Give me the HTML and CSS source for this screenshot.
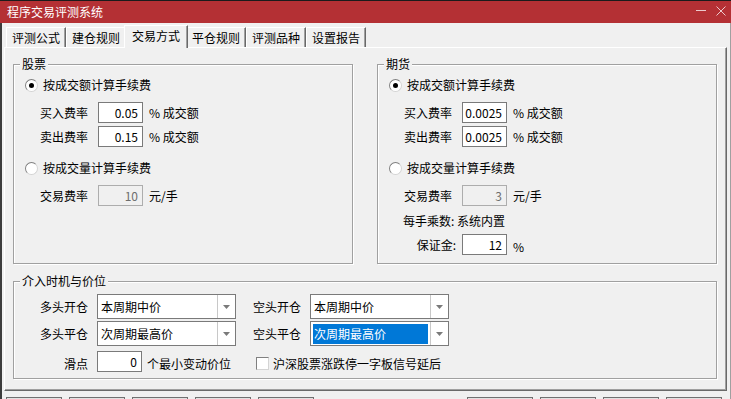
FILE: index.html
```html
<!DOCTYPE html>
<html lang="zh-CN">
<head>
    <meta charset="UTF-8">
    <title>程序交易评测系统</title>
    <link rel="stylesheet" href="styles.css">
</head>
<body>
    <div class="window">
        <div class="titlebar">
            <span class="title">程序交易评测系统</span>
            <span class="win-btns">
                <svg width="10" height="10" viewBox="0 0 10 10"><path d="M0 4.5H10" stroke="#ecc9cb" stroke-width="1"/></svg>
                <svg width="10" height="10" viewBox="0 0 10 10"><path d="M0.5 0.5L9.5 9.5M9.5 0.5L0.5 9.5" stroke="#ecc9cb" stroke-width="1"/></svg>
            </span>
        </div>

        <div class="client">
            <div class="tabs">
                <div class="tab">评测公式</div>
                <div class="tab">建仓规则</div>
                <div class="tab active">交易方式</div>
                <div class="tab">平仓规则</div>
                <div class="tab">评测品种</div>
                <div class="tab">设置报告</div>
            </div>

            <div class="panel">
                <div class="top-groups">
                    <div class="group">
                        <div class="legend">股票</div>
                        <div class="opt"><span class="radio on"></span>按成交额计算手续费</div>
                        <div class="field">
                            <span class="label">买入费率</span>
                            <span class="edit">0.05</span>
                            <span class="unit">% 成交额</span>
                        </div>
                        <div class="field">
                            <span class="label">卖出费率</span>
                            <span class="edit">0.15</span>
                            <span class="unit">% 成交额</span>
                        </div>
                        <div class="opt"><span class="radio"></span>按成交量计算手续费</div>
                        <div class="field">
                            <span class="label">交易费率</span>
                            <span class="edit off">10</span>
                            <span class="unit">元/手</span>
                        </div>
                    </div>

                    <div class="group">
                        <div class="legend">期货</div>
                        <div class="opt"><span class="radio on"></span>按成交额计算手续费</div>
                        <div class="field">
                            <span class="label">买入费率</span>
                            <span class="edit">0.0025</span>
                            <span class="unit">% 成交额</span>
                        </div>
                        <div class="field">
                            <span class="label">卖出费率</span>
                            <span class="edit">0.0025</span>
                            <span class="unit">% 成交额</span>
                        </div>
                        <div class="opt"><span class="radio"></span>按成交量计算手续费</div>
                        <div class="field">
                            <span class="label">交易费率</span>
                            <span class="edit off">3</span>
                            <span class="unit">元/手</span>
                        </div>
                        <div class="note">每手乘数: 系统内置</div>
                        <div class="field">
                            <span class="label wide">保证金:</span>
                            <span class="edit">12</span>
                            <span class="unit low">%</span>
                        </div>
                    </div>
                </div>

                <div class="group entry">
                    <div class="legend">介入时机与价位</div>
                    <div class="row">
                        <span class="label">多头开仓</span>
                        <div class="combo">
                            <span class="combo-text">本周期中价</span>
                            <span class="combo-btn"><svg width="7" height="4" viewBox="0 0 7 4"><path d="M0 0H7L3.5 4Z" fill="#7a7a7a"/></svg></span>
                        </div>
                        <span class="label">空头开仓</span>
                        <div class="combo">
                            <span class="combo-text">本周期中价</span>
                            <span class="combo-btn"><svg width="7" height="4" viewBox="0 0 7 4"><path d="M0 0H7L3.5 4Z" fill="#7a7a7a"/></svg></span>
                        </div>
                    </div>
                    <div class="row">
                        <span class="label">多头平仓</span>
                        <div class="combo">
                            <span class="combo-text">次周期最高价</span>
                            <span class="combo-btn"><svg width="7" height="4" viewBox="0 0 7 4"><path d="M0 0H7L3.5 4Z" fill="#7a7a7a"/></svg></span>
                        </div>
                        <span class="label">空头平仓</span>
                        <div class="combo focus">
                            <span class="combo-text">次周期最高价</span>
                            <span class="combo-btn"><svg width="7" height="4" viewBox="0 0 7 4"><path d="M0 0H7L3.5 4Z" fill="#7a7a7a"/></svg></span>
                        </div>
                    </div>
                    <div class="row last">
                        <span class="label">滑点</span>
                        <div class="slip">
                            <span class="edit">0</span>
                            <span class="unit">个最小变动价位</span>
                        </div>
                        <div class="check"><span class="box"></span>沪深股票涨跌停一字板信号延后</div>
                    </div>
                </div>
            </div>

            <div class="buttons">
                <span class="btn"></span>
                <span class="btn"></span>
                <span class="btn"></span>
                <span class="btn"></span>
                <span class="btn"></span>
                <span class="btn wide"></span>
                <span class="btn"></span>
                <span class="btn"></span>
                <span class="btn"></span>
            </div>
        </div>
    </div>
</body>
</html>
```

FILE: styles.css
```css
* {
    box-sizing: border-box;
}
html, body {
    margin: 0;
}
body {
    width: 731px;
    height: 399px;
    overflow: hidden;
    font: 12px/16px "Noto Sans CJK SC", "Noto Sans", sans-serif;
    color: #000;
    background: #f0f0f0;
}
.window {
    display: flex;
    flex-direction: column;
    height: 399px;
    overflow: hidden;
}

/* title bar */
.titlebar {
    flex: none;
    height: 23px;
    border-top: 1px solid #1b1b1b;
    background: #b43034;
    color: #fff;
    display: flex;
    align-items: center;
    justify-content: space-between;
    padding: 0 5px 0 7px;
}
.win-btns {
    display: flex;
    gap: 10px;
    margin-top: -3px;
}
.win-btns svg {
    display: block;
}

/* dialog body */
.client {
    flex: 1;
    min-height: 0;
    overflow: hidden;
    display: flex;
    flex-direction: column;
    border-left: 2px solid #3c3c3c;
    border-right: 1px solid #a0a0a0;
    padding: 2px 3px 0 2px;
}
.tabs {
    display: flex;
    align-items: flex-end;
    height: 22px;
    padding-left: 2px;
}
.tab {
    width: 60px;
    height: 20px;
    display: flex;
    align-items: center;
    justify-content: center;
    border-top: 1px solid #fff;
    border-left: 1px solid #fff;
    border-right: 1px solid #696969;
    box-shadow: inset -1px 0 0 #a0a0a0;
    background: #f0f0f0;
}
.tab.active {
    width: 64px;
    height: 23px;
    margin: 0 -2px -1px;
    padding-bottom: 3px;
    position: relative;
    z-index: 1;
}
.panel {
    flex: none;
    height: 344px;
    border: 1px solid;
    border-color: #fff #696969 #696969 #fff;
    box-shadow: inset -1px -1px 0 #a0a0a0;
    padding: 16px 9px 11px 8px;
}
.top-groups {
    display: flex;
    gap: 24px;
}
.group {
    border: 1px solid #a0a0a0;
    box-shadow: inset 1px 1px 0 #fff, 1px 1px 0 #fff;
}
.top-groups .group {
    width: 340px;
    height: 200px;
}
.legend {
    display: table;
    margin: -8px 0 0 6px;
    padding: 0 2px;
    line-height: 14px;
    background: #f0f0f0;
}

/* radio + edit rows */
.opt {
    display: flex;
    align-items: center;
    margin-top: 6px;
    padding-left: 11px;
}
.field + .opt {
    margin-top: 13px;
}
.radio {
    width: 13px;
    height: 13px;
    border-radius: 50%;
    border: 1px solid;
    border-color: #808080 #d4d4d4 #d4d4d4 #808080;
    background: #fff;
    margin-right: 5px;
    display: flex;
    align-items: center;
    justify-content: center;
}
.radio.on::after {
    content: "";
    width: 5px;
    height: 5px;
    border-radius: 50%;
    background: #000;
}
.field {
    display: flex;
    align-items: center;
    height: 21px;
    padding-left: 26px;
}
.opt + .field {
    margin-top: 9px;
}
.field + .field {
    margin-top: 3px;
}
.note + .field {
    margin-top: 5px;
}
.field .label {
    width: 48px;
    margin-right: 10px;
}
.field .label.wide {
    width: 52px;
    margin-right: 6px;
    text-align: right;
}
.note {
    margin-top: 7px;
    padding-left: 25px;
}
.edit {
    flex: none;
    width: 45px;
    height: 21px;
    border: 1px solid #7a7a7a;
    background: #fff;
    text-align: right;
    padding-right: 4px;
    line-height: 19px;
}
.edit.off {
    background: #f0f0f0;
    border-color: #adadad;
    color: #6d6d6d;
}
.unit {
    margin-left: 6px;
}
.unit.low {
    padding-top: 5px;
}

/* entry group */
.entry {
    margin-top: 17px;
    height: 98px;
}
.row {
    display: flex;
    align-items: center;
    padding-left: 26px;
    margin-top: 2px;
}
.entry .legend + .row {
    margin-top: 6px;
}
.row.last {
    margin-top: 5px;
    height: 21px;
}
.row .label {
    width: 48px;
    margin-right: 9px;
    text-align: right;
}
.combo + .label {
    margin-left: 17px;
}
.combo {
    width: 139px;
    height: 25px;
    display: flex;
    border: 1px solid #7a7a7a;
    background: #fff;
}
.combo-text {
    flex: 1;
    padding-left: 3px;
    line-height: 23px;
}
.combo.focus .combo-text {
    margin: 2px 2px 1px 2px;
    padding-left: 1px;
    line-height: 20px;
    background: #0078d7;
    color: #fff;
}
.combo-btn {
    width: 18px;
    border-left: 1px solid #c8c8c8;
    display: flex;
    align-items: center;
    justify-content: center;
}
.combo-btn svg {
    display: block;
}
.slip {
    width: 139px;
    display: flex;
    align-items: center;
}
.slip .unit {
    margin-left: 5px;
}
.row.last .label,
.slip .unit,
.check {
    padding-top: 4px;
}
.check {
    display: flex;
    align-items: center;
    margin-left: 20px;
}
.box {
    width: 13px;
    height: 13px;
    border: 1px solid;
    border-color: #808080 #d4d4d4 #d4d4d4 #808080;
    background: #fff;
    margin-right: 4px;
}

/* bottom buttons */
.buttons {
    flex: none;
    display: flex;
    gap: 7px;
    margin-top: 6px;
    padding: 0 5px 0 2px;
}
.btn {
    flex: none;
    width: 56px;
    height: 23px;
    border: 1px solid #707070;
    background: #e1e1e1;
}
.btn.wide {
    width: 66px;
    margin-left: auto;
}
```
